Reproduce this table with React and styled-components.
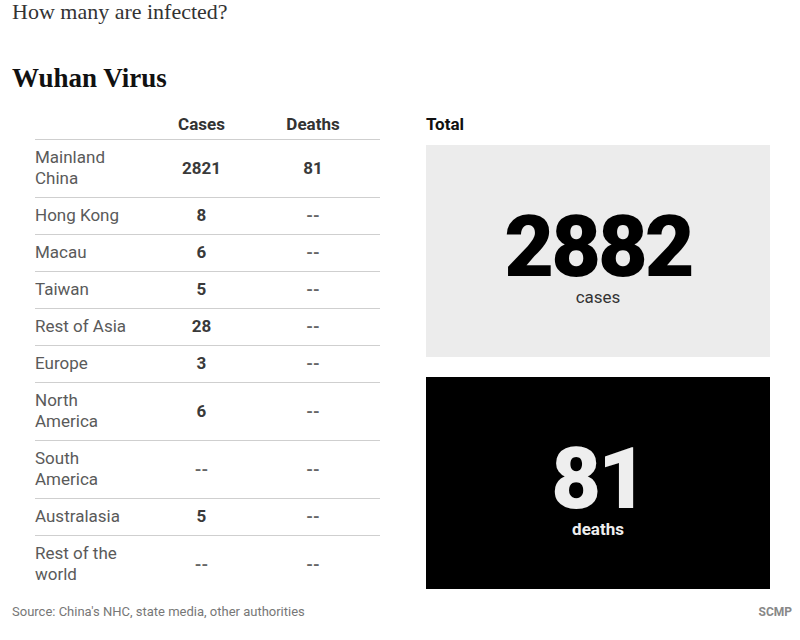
import styled, { createGlobalStyle } from "styled-components";

const GlobalStyle = createGlobalStyle`
  html, body {
    margin: 0;
    padding: 0;
    background: #fff;
  }
  body {
    font-family: Roboto, "Liberation Sans", sans-serif;
  }
`;

const Page = styled.div`
  width: 800px;
  height: 640px;
  box-sizing: border-box;
  padding: 0 8px 0 12px;
  overflow: hidden;
`;

const Kicker = styled.h2`
  margin: 0;
  font-family: "Liberation Serif", serif;
  font-weight: 400;
  font-size: 22px;
  line-height: 24px;
  color: #333;
`;

const Title = styled.h1`
  margin: 38px 0 0;
  font-family: "Liberation Serif", serif;
  font-weight: 700;
  font-size: 27px;
  line-height: 32px;
  color: #111;
`;

const Main = styled.div`
  display: flex;
  gap: 46px;
  margin-top: 20px;
  padding-left: 23px;
`;

const Table = styled.div`
  width: 345px;
  display: flex;
  flex-direction: column;
`;

const Row = styled.div`
  display: grid;
  grid-template-columns: 122px 89px 134px;
  align-items: center;
  padding: ${(p) => (p.$head ? "0 0 4px" : "7px 0 8px")};
  border-bottom: ${(p) => (p.$last ? "none" : "1px solid #cfcfcf")};
  font-size: 17px;
  line-height: 21px;
`;

const Label = styled.div`
  padding-right: 24px;
  color: #5a5a5a;
`;

const Head = styled.div`
  text-align: center;
  font-weight: 700;
  color: #333;
`;

const Value = styled.div`
  text-align: center;
  font-weight: 700;
  color: ${(p) => (p.$empty ? "#666" : "#3a3a3a")};
`;

const Side = styled.div`
  width: 344px;
  display: flex;
  flex-direction: column;
`;

const SideTitle = styled.div`
  font-size: 17px;
  line-height: 21px;
  font-weight: 700;
  color: #111;
  margin-bottom: 10px;
`;

const Stat = styled.div`
  height: 212px;
  box-sizing: border-box;
  padding-top: 12px;
  margin-bottom: ${(p) => (p.$dark ? "0" : "20px")};
  background: ${(p) => (p.$dark ? "#000" : "#ececec")};
  color: ${(p) => (p.$dark ? "#eee" : "#000")};
  display: flex;
  flex-direction: column;
  align-items: center;
  justify-content: center;
`;

const Big = styled.div`
  font-size: 86px;
  line-height: 80px;
  font-weight: 900;
  letter-spacing: -3px;
`;

const Caption = styled.div`
  font-size: 17px;
  line-height: 21px;
  font-weight: ${(p) => (p.$dark ? 700 : 400)};
  color: ${(p) => (p.$dark ? "#eee" : "#333")};
`;

const Footer = styled.div`
  display: flex;
  justify-content: space-between;
  align-items: baseline;
  margin-top: 11px;
  line-height: 16px;
`;

const Source = styled.span`
  font-size: 13px;
  color: #777;
`;

const Credit = styled.span`
  color: #888;
  font-weight: 700;
  font-size: 12px;
`;

const rows = [
  ["Mainland China", "2821", "81"],
  ["Hong Kong", "8", "--"],
  ["Macau", "6", "--"],
  ["Taiwan", "5", "--"],
  ["Rest of Asia", "28", "--"],
  ["Europe", "3", "--"],
  ["North America", "6", "--"],
  ["South America", "--", "--"],
  ["Australasia", "5", "--"],
  ["Rest of the world", "--", "--"],
];

export default function App() {
  return (
    <Page>
      <GlobalStyle />
      <Kicker>How many are infected?</Kicker>
      <Title>Wuhan Virus</Title>
      <Main>
        <Table>
          <Row $head>
            <Label />
            <Head>Cases</Head>
            <Head>Deaths</Head>
          </Row>
          {rows.map(([name, cases, deaths], i) => (
            <Row key={name} $last={i === rows.length - 1}>
              <Label>{name}</Label>
              <Value $empty={cases === "--"}>{cases}</Value>
              <Value $empty={deaths === "--"}>{deaths}</Value>
            </Row>
          ))}
        </Table>
        <Side>
          <SideTitle>Total</SideTitle>
          <Stat>
            <Big>2882</Big>
            <Caption>cases</Caption>
          </Stat>
          <Stat $dark>
            <Big>81</Big>
            <Caption $dark>deaths</Caption>
          </Stat>
        </Side>
      </Main>
      <Footer>
        <Source>Source: China's NHC, state media, other authorities</Source>
        <Credit>SCMP</Credit>
      </Footer>
    </Page>
  );
}
